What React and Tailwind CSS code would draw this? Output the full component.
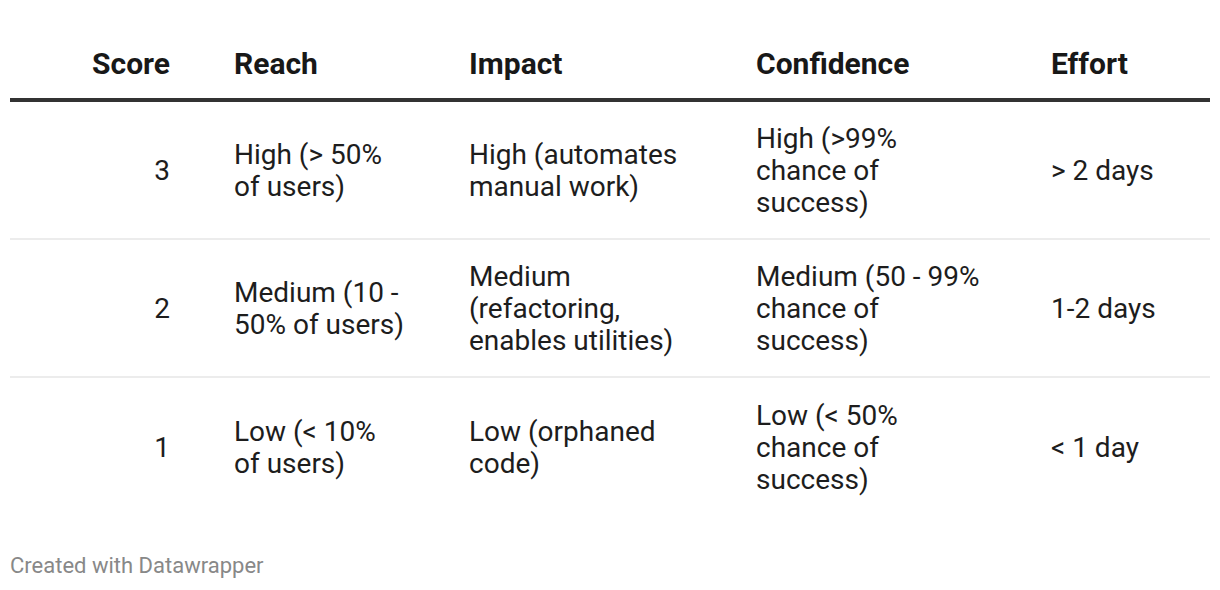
import React from 'react';

const rows = [
  {
    score: '3',
    reach: 'High (> 50%\nof users)',
    impact: 'High (automates\nmanual work)',
    confidence: 'High (>99%\nchance of\nsuccess)',
    effort: '> 2 days',
  },
  {
    score: '2',
    reach: 'Medium (10 -\n50% of users)',
    impact: 'Medium\n(refactoring,\nenables utilities)',
    confidence: 'Medium (50 - 99%\nchance of\nsuccess)',
    effort: '1-2 days',
  },
  {
    score: '1',
    reach: 'Low (< 10%\nof users)',
    impact: 'Low (orphaned\ncode)',
    confidence: 'Low (< 50%\nchance of\nsuccess)',
    effort: '< 1 day',
  },
];

const cols = 'grid grid-cols-[224px_235px_287px_295px_159px]';

export default function App() {
  return (
    <div className="w-[1220px] h-[590px] bg-white px-[10px] text-[#1d1d1d]" style={{ fontFamily: 'Roboto, "Noto Sans", sans-serif' }}>
      <div className={`${cols} h-[102px] items-end pb-[18px] border-b-[4px] border-[#333] text-[30px] font-bold leading-[32px] text-[#181818]`}>
        <div className="text-right pr-[64px]">Score</div>
        <div>Reach</div>
        <div>Impact</div>
        <div>Confidence</div>
        <div>Effort</div>
      </div>

      {rows.map((r, i) => (
        <div
          key={r.score}
          className={`${cols} h-[138px] pt-[2px] items-center text-[28px] leading-[32px] whitespace-pre-line ${i < rows.length - 1 ? 'border-b-2 border-[#ececec]' : ''}`}
        >
          <div className="text-right pr-[64px]">{r.score}</div>
          <div>{r.reach}</div>
          <div>{r.impact}</div>
          <div>{r.confidence}</div>
          <div>{r.effort}</div>
        </div>
      ))}

      <div className="mt-[38px] text-[22px] leading-[24px] text-[#888]">Created with Datawrapper</div>
    </div>
  );
}
